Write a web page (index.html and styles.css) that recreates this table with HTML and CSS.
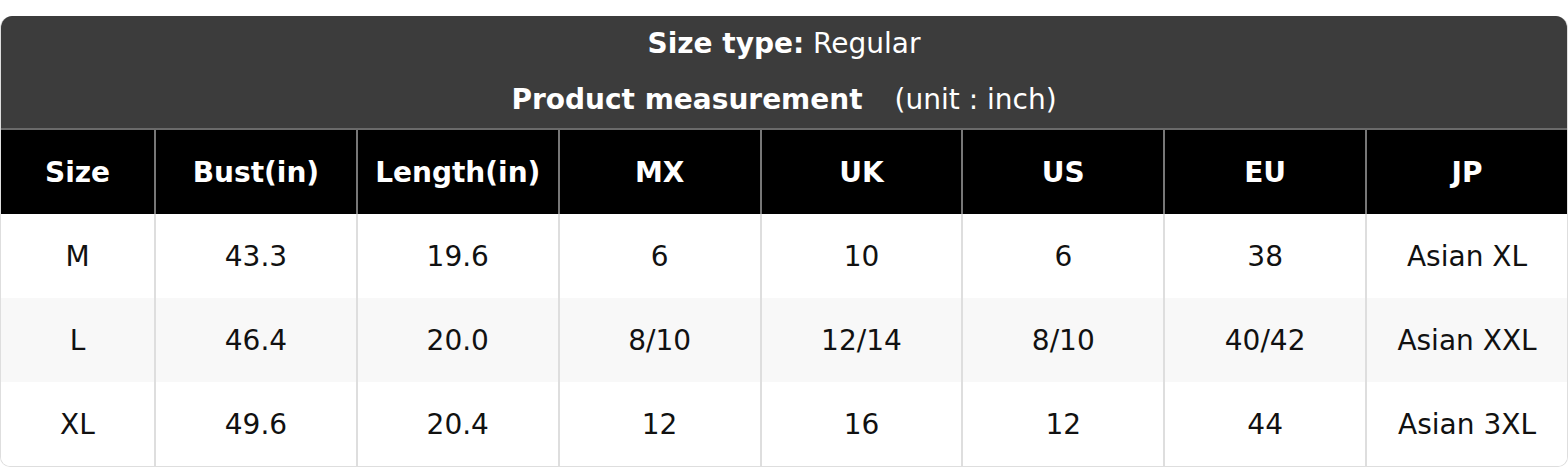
FILE: index.html
```html
<!DOCTYPE html>
<html lang="en">
<head>
<meta charset="utf-8">
<title>Size chart</title>
<link rel="stylesheet" href="styles.css">
</head>
<body>
<div class="chart">
  <div class="caption">
    <div class="caption-line"><b>Size type:</b> Regular</div>
    <div class="caption-line"><b>Product measurement</b><span class="unit">(unit : inch)</span></div>
  </div>
  <table class="sizes">
    <colgroup>
      <col class="col-first">
      <col><col><col><col><col><col><col>
    </colgroup>
    <thead>
      <tr><th>Size</th><th>Bust(in)</th><th>Length(in)</th><th>MX</th><th>UK</th><th>US</th><th>EU</th><th>JP</th></tr>
    </thead>
    <tbody>
      <tr><td>M</td><td>43.3</td><td>19.6</td><td>6</td><td>10</td><td>6</td><td>38</td><td>Asian XL</td></tr>
      <tr class="alt"><td>L</td><td>46.4</td><td>20.0</td><td>8/10</td><td>12/14</td><td>8/10</td><td>40/42</td><td>Asian XXL</td></tr>
      <tr><td>XL</td><td>49.6</td><td>20.4</td><td>12</td><td>16</td><td>12</td><td>44</td><td>Asian 3XL</td></tr>
    </tbody>
  </table>
</div>
</body>
</html>
```

FILE: styles.css
```css
* { box-sizing: border-box; }
html, body { margin: 0; padding: 0; background: #fff; }
body {
  font-family: "DejaVu Sans", Verdana, sans-serif;
  font-size: 28px;
  color: #111;
}
.chart {
  margin-top: 16px;
  width: 1568px;
  border-radius: 12px 12px 10px 10px;
  overflow: hidden;
  border: 1px solid #dedede;
  border-top: none;
}
.caption {
  background: #3c3c3c;
  color: #fff;
  text-align: center;
  height: 114px;
  border-bottom: 2px solid #6a6a6a;
  display: flex;
  flex-direction: column;
}
.caption-line {
  height: 56px;
  line-height: 56px;
}
.caption-line b { font-weight: bold; }
.unit { margin-left: 32px; }
.sizes {
  width: 100%;
  table-layout: fixed;
  border-collapse: separate;
  border-spacing: 0;
}
.col-first { width: 153px; }
.sizes th, .sizes td {
  height: 84px;
  padding: 0;
  text-align: center;
  vertical-align: middle;
  white-space: nowrap;
}
.sizes th {
  background: #000;
  color: #fff;
  font-weight: bold;
  border-left: 2px solid #777;
}
.sizes td {
  background: #fff;
  border-left: 2px solid #dedede;
}
.sizes tr.alt td { background: #f8f8f8; }
.sizes th:first-child, .sizes td:first-child { border-left: none; }
```
